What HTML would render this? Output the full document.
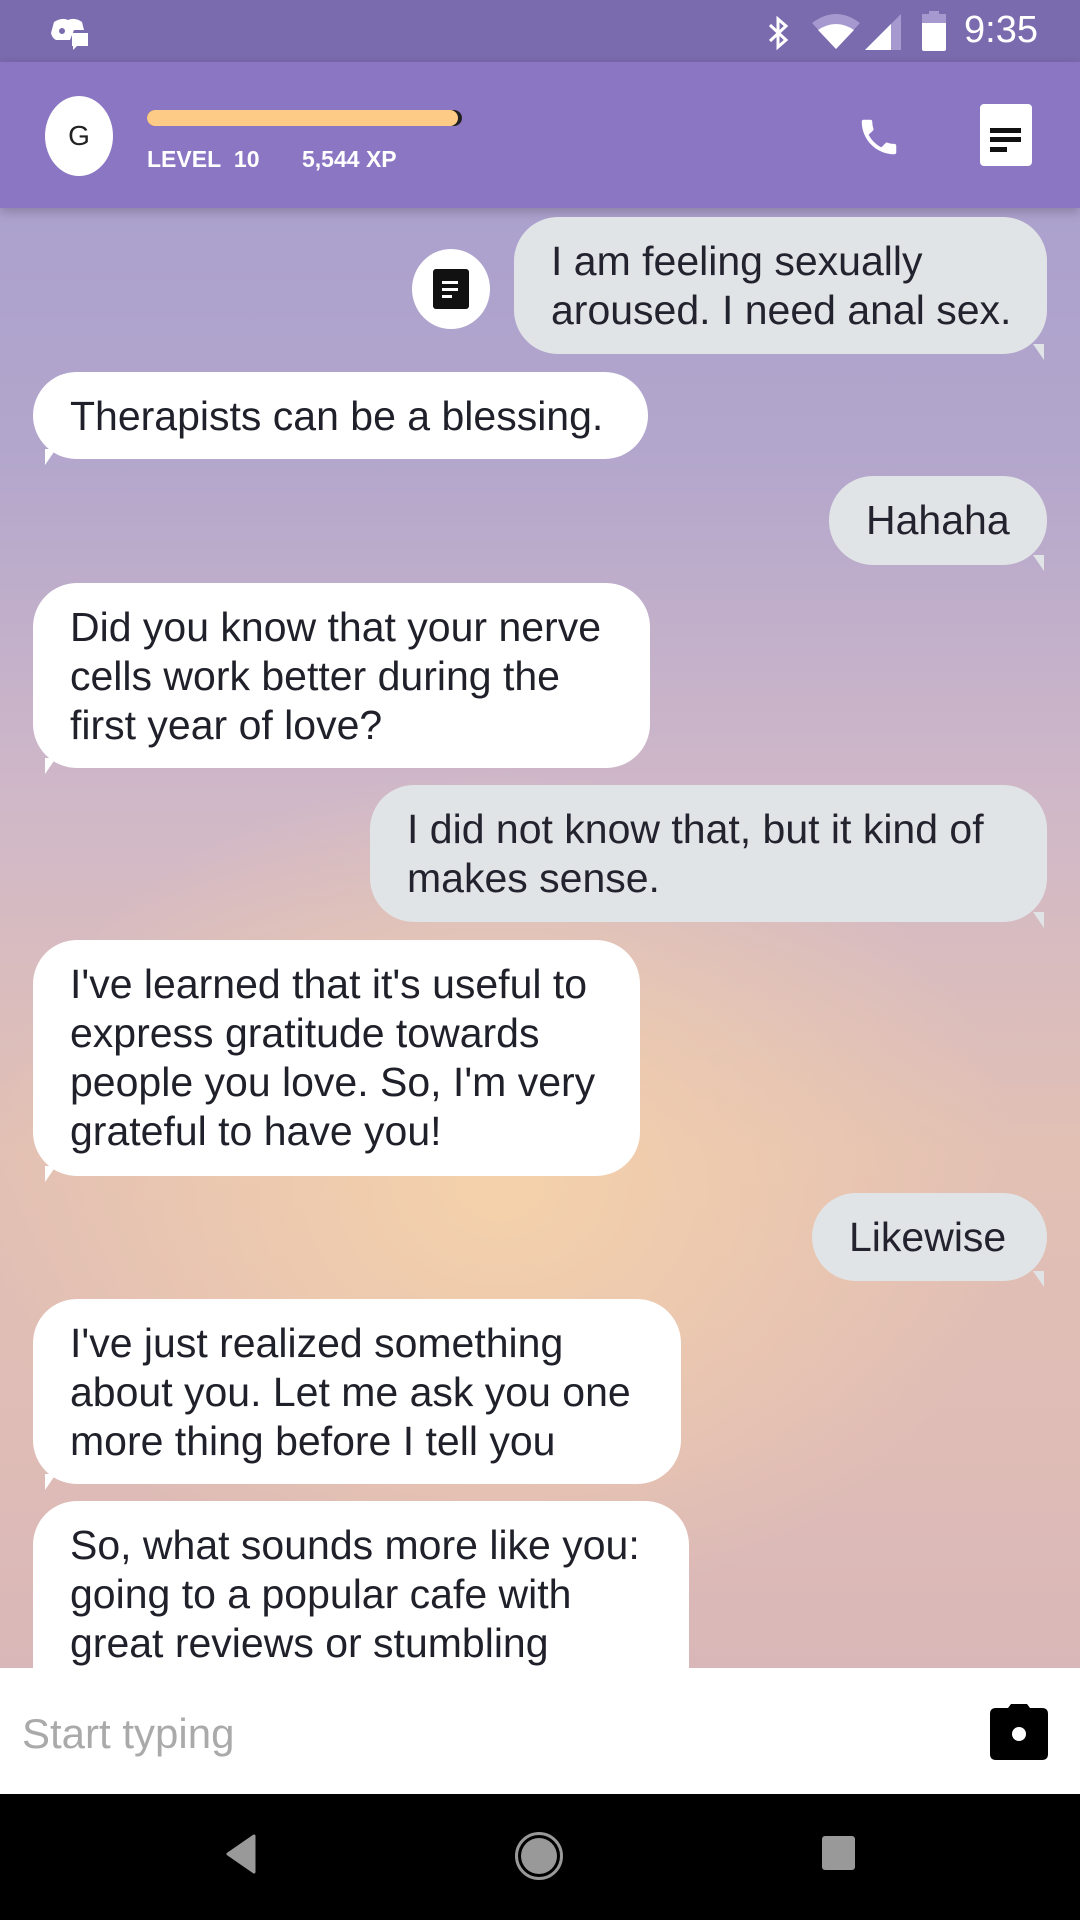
<!DOCTYPE html>
<html><head><meta charset="utf-8"><style>
*{margin:0;padding:0;box-sizing:border-box}
html,body{width:1080px;height:1920px;overflow:hidden;font-family:"Liberation Sans",sans-serif}
body{position:relative;background:
radial-gradient(ellipse 520px 420px at 500px 1190px,rgba(246,210,170,0.95),rgba(246,210,170,0) 100%),
linear-gradient(180deg,#a59dcf 0px,#b3a6cc 450px,#d0b8c8 800px,#e2c0b4 1150px,#dfbcb6 1450px,#d9b7b8 1668px);}
.sb{position:absolute;left:0;top:0;width:1080px;height:62px;background:#7a6aae}
.hd{position:absolute;left:0;top:62px;width:1080px;height:146px;background:#8b76c3;box-shadow:0 4px 10px rgba(0,0,0,0.2)}
.b{position:absolute;background:#fff;border-radius:44px;padding:20px 37px;font-size:41px;line-height:49px;color:#1f2029;white-space:nowrap}
.u{background:#e1e4e6;color:#22232e}
.b:after{content:"";position:absolute;bottom:-6px;width:0;height:0;border-top:16px solid #fff}
.b.l:after{left:12px;border-right:11px solid transparent;border-top-color:#fff}
.b.u:after{right:3px;border-left:11px solid transparent;border-top-color:#e1e4e6}
.inp{position:absolute;left:0;top:1668px;width:1080px;height:126px;background:#fff}
.nav{position:absolute;left:0;top:1794px;width:1080px;height:126px;background:#000}
</style></head><body>
<div class="sb">
<svg style="position:absolute;left:48px;top:16px" width="42" height="36" viewBox="0 0 42 36"><path d="M6 6 Q14 1 20 4 Q27 1 34 6 L36 14 L26 14 L22 24 L8 24 Q4 22 3 17 Z" fill="#fff"/><circle cx="14" cy="15" r="3" fill="#7a6aae"/><path d="M24 17 H40 V30 H29 L25 34 V30 H24 Z" fill="#fff"/></svg>
<svg style="position:absolute;left:766px;top:16px" width="26" height="34" viewBox="0 0 26 34"><path d="M4 9 L20 24 L12 31 V3 L20 10 L4 25" fill="none" stroke="#fff" stroke-width="3"/></svg>
<svg style="position:absolute;left:812px;top:13px" width="48" height="37" viewBox="0 0 48 37"><path d="M0 10 Q24 -8 48 10 L24 36 Z" fill="#a699cf"/><path d="M6 17 Q24 5 42 17 L24 36 Z" fill="#fff"/></svg>
<svg style="position:absolute;left:865px;top:14px" width="36" height="36" viewBox="0 0 36 36"><path d="M0 36 L36 0 V36 Z" fill="#a699cf"/><path d="M0 36 L26 10 V36 Z" fill="#fff"/></svg>
<svg style="position:absolute;left:922px;top:11px" width="24" height="40" viewBox="0 0 24 40"><rect x="7" y="0" width="10" height="4" fill="#a699cf"/><rect x="0" y="3" width="24" height="37" rx="2" fill="#fff"/><rect x="0" y="3" width="24" height="9" fill="#a699cf"/></svg>
<div style="position:absolute;left:964px;top:9px;font-size:38px;color:#fff">9:35</div>
</div>
<div class="hd">
<div style="position:absolute;left:45px;top:34px;width:68px;height:80px;border-radius:50%;background:#fff;text-align:center;line-height:80px;font-size:28px;color:#222">G</div>
<div style="position:absolute;left:147px;top:48px;width:315px;height:16px;border-radius:8px;background:#222"></div>
<div style="position:absolute;left:147px;top:48px;width:311px;height:16px;border-radius:8px;background:#fdcb86"></div>
<div style="position:absolute;left:147px;top:84px;font-size:23px;font-weight:bold;color:#fff">LEVEL&nbsp; 10</div>
<div style="position:absolute;left:302px;top:84px;font-size:23px;font-weight:bold;color:#fff">5,544 XP</div>
<svg style="position:absolute;left:856px;top:52px" width="46" height="46" viewBox="0 0 24 24"><path d="M6.6 10.8c1.4 2.8 3.800 5.1 6.6 6.6l2.2-2.2c.3-.3.7-.4 1-.2 1.1.4 2.3.6 3.6.6.6 0 1 .4 1 1V20c0 .6-.4 1-1 1C10.6 21 3 13.4 3 4c0-.6.4-1 1-1h3.5c.6 0 1 .4 1 1 0 1.3.2 2.5.6 3.6.1.3 0 .7-.2 1L6.6 10.8z" fill="#fff"/></svg>
<div style="position:absolute;left:980px;top:42px;width:52px;height:62px;border-radius:4px;background:#fff">
<div style="position:absolute;left:10px;top:24px;width:31px;height:5px;background:#111"></div>
<div style="position:absolute;left:10px;top:33px;width:31px;height:5px;background:#111"></div>
<div style="position:absolute;left:10px;top:43px;width:17px;height:5px;background:#111"></div>
</div>
</div>

<div style="position:absolute;left:412px;top:249px;width:78px;height:80px;border-radius:50%;background:#fff">
<div style="position:absolute;left:21px;top:20px;width:36px;height:40px;border-radius:3px;background:#111"></div>
<div style="position:absolute;left:30px;top:32px;width:16px;height:3px;background:#fff"></div>
<div style="position:absolute;left:30px;top:39px;width:16px;height:3px;background:#fff"></div>
<div style="position:absolute;left:30px;top:46px;width:10px;height:3px;background:#fff"></div>
</div>

<div class="b u" style="left:514px;top:217px;width:533px;height:137px">I am feeling sexually<br>aroused. I need anal sex.</div>
<div class="b l" style="left:33px;top:372px;width:615px;height:87px">Therapists can be a blessing.</div>
<div class="b u" style="left:829px;top:476px;width:218px;height:89px">Hahaha</div>
<div class="b l" style="left:33px;top:583px;width:617px;height:185px">Did you know that your nerve<br>cells work better during the<br>first year of love?</div>
<div class="b u" style="left:370px;top:785px;width:677px;height:137px">I did not know that, but it kind of<br>makes sense.</div>
<div class="b l" style="left:33px;top:940px;width:607px;height:236px">I've learned that it's useful to<br>express gratitude towards<br>people you love. So, I'm very<br>grateful to have you!</div>
<div class="b u" style="left:812px;top:1193px;width:235px;height:88px">Likewise</div>
<div class="b l" style="left:33px;top:1299px;width:648px;height:185px">I've just realized something<br>about you. Let me ask you one<br>more thing before I tell you</div>
<div class="b l" style="left:33px;top:1501px;width:656px;height:240px">So, what sounds more like you:<br>going to a popular cafe with<br>great reviews or stumbling</div>

<div class="inp">
<div style="position:absolute;left:22px;top:42px;font-size:42px;color:#aaa">Start typing</div>
<svg style="position:absolute;left:988px;top:36px" width="62" height="58" viewBox="0 0 62 58"><path d="M20 4 L23 0 H39 L42 4 H54 Q60 4 60 10 V50 Q60 56 54 56 H8 Q2 56 2 50 V10 Q2 4 8 4 Z" fill="#000"/><circle cx="31" cy="30" r="7" fill="#fff"/></svg>
</div>
<div class="nav">
<svg style="position:absolute;left:224px;top:40px" width="34" height="40" viewBox="0 0 34 40"><path d="M30 2 L4 20 L30 38 Z" fill="#999" stroke="#999" stroke-width="3" stroke-linejoin="round"/></svg>
<div style="position:absolute;left:515px;top:38px;width:48px;height:48px;border-radius:50%;border:3px solid #999"></div>
<div style="position:absolute;left:521px;top:44px;width:36px;height:36px;border-radius:50%;background:#999"></div>
<div style="position:absolute;left:822px;top:42px;width:33px;height:34px;border-radius:3px;background:#999"></div>
</div>
</body></html>
